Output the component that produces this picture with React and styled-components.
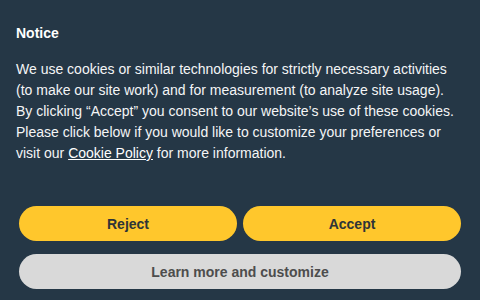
import React from 'react';
import styled, { createGlobalStyle } from 'styled-components';

const GlobalStyle = createGlobalStyle`
  html, body {
    margin: 0;
    padding: 0;
    background: #253746;
  }
`;

const Banner = styled.div`
  width: 480px;
  height: 300px;
  box-sizing: border-box;
  background: #253746;
  padding: 23px 16px 0;
  font-family: "Liberation Sans", Arial, sans-serif;
  color: #ffffff;
  display: flex;
  flex-direction: column;
`;

const Title = styled.div`
  font-size: 14px;
  font-weight: bold;
  line-height: 21px;
  margin-bottom: 15px;
`;

const Body = styled.p`
  margin: 0;
  font-size: 14px;
  line-height: 21px;
  color: #f4f5f6;
`;

const PolicyLink = styled.a`
  color: #ffffff;
  text-decoration: underline;
`;

const Actions = styled.div`
  margin-top: 42px;
  padding: 0 3px;
  display: flex;
  flex-direction: column;
  gap: 13px;
`;

const Row = styled.div`
  display: grid;
  grid-template-columns: 1fr 1fr;
  gap: 6px;
`;

const Button = styled.button`
  height: 35px;
  border: none;
  border-radius: 18px;
  font-family: "Liberation Sans", Arial, sans-serif;
  font-size: 14px;
  font-weight: bold;
  cursor: pointer;
  background: ${(p) => (p.secondary ? '#d9d9d9' : '#ffc72c')};
  color: ${(p) => (p.secondary ? '#4d4d4d' : '#2e3438')};
`;

const App = () => (
  <>
    <GlobalStyle />
    <Banner>
      <Title>Notice</Title>
      <Body>
        We use cookies or similar technologies for strictly necessary activities
        (to make our site work) and for measurement (to analyze site usage).
        By clicking “Accept” you consent to our website’s use of these cookies.
        Please click below if you would like to customize your preferences or
        visit our <PolicyLink href="#">Cookie Policy</PolicyLink> for more information.
      </Body>
      <Actions>
        <Row>
          <Button>Reject</Button>
          <Button>Accept</Button>
        </Row>
        <Button secondary>Learn more and customize</Button>
      </Actions>
    </Banner>
  </>
);

export default App;
